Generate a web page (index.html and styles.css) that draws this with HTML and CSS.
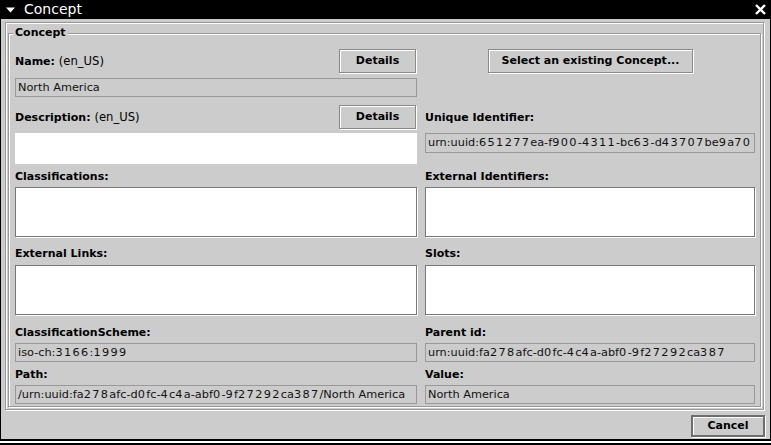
FILE: index.html
```html
<!DOCTYPE html>
<html>
<head>
<meta charset="utf-8">
<link rel="stylesheet" href="styles.css">
</head>
<body>
<div class="frame">
  <div class="window">
    <div class="titlebar">
      <svg class="menu-tri" width="10" height="6" viewBox="0 0 10 6"><polygon points="0,0.5 9,0.5 4.5,5.5" fill="#fff"/></svg>
      <span class="title">Concept</span>
      <svg class="close" width="11" height="11" viewBox="0 0 11 11"><path d="M1 1 L10 10 M10 1 L1 10" stroke="#fff" stroke-width="2.4" fill="none"/></svg>
    </div>
    <div class="content">
      <div class="panel">
        <div class="group">
          <span class="legend">Concept</span>
          <div class="grid">
            <div class="hdr">
              <span class="lbl">Name: <span class="loc">(en_US)</span></span>
              <button class="btn details">Details</button>
            </div>
            <button class="btn select">Select an existing Concept...</button>

            <div class="field r2">North America</div>
            <div></div>

            <div class="hdr r3">
              <span class="lbl">Description: <span class="loc">(en_US)</span></span>
              <button class="btn details">Details</button>
            </div>
            <div class="lbl r3 mid">Unique Identifier:</div>

            <div class="textarea r4"></div>
            <div class="field uid r4">urn:uuid:<span class="n">651277</span>ea-f<span class="n">900</span>-<span class="n">4311</span>-bc<span class="n">63</span>-d<span class="n">43707</span>be<span class="n">9</span>a<span class="n">70</span></div>

            <div class="lbl r5">Classifications:</div>
            <div class="lbl r5">External Identifiers:</div>

            <div class="list r6"></div>
            <div class="list r6"></div>

            <div class="lbl r7">External Links:</div>
            <div class="lbl r7">Slots:</div>

            <div class="list r8"></div>
            <div class="list r8"></div>

            <div class="lbl r9">ClassificationScheme:</div>
            <div class="lbl r9">Parent id:</div>

            <div class="field r10">iso-ch:<span class="n">3166</span>:<span class="n">1999</span></div>
            <div class="field r10">urn:uuid:fa<span class="n">278</span>afc-d<span class="n">0</span>fc-<span class="n">4</span>c<span class="n">4</span>a-abf<span class="n">0</span>-<span class="n">9</span>f<span class="n">27292</span>ca<span class="n">387</span></div>

            <div class="lbl r11">Path:</div>
            <div class="lbl r11">Value:</div>

            <div class="field r12">/urn:uuid:fa<span class="n">278</span>afc-d<span class="n">0</span>fc-<span class="n">4</span>c<span class="n">4</span>a-abf<span class="n">0</span>-<span class="n">9</span>f<span class="n">27292</span>ca<span class="n">387</span>/North America</div>
            <div class="field r12">North America</div>
          </div>
        </div>
      </div>
      <div class="footer">
        <button class="btn cancel">Cancel</button>
      </div>
    </div>
  </div>
</div>
</body>
</html>
```

FILE: styles.css
```css
* { box-sizing: border-box; }
html, body { margin: 0; padding: 0; }
body {
  width: 771px;
  height: 445px;
  overflow: hidden;
  font-family: "DejaVu Sans", sans-serif;
  font-size: 11px;
  color: #000;
  background: #000;
}
.frame {
  width: 771px;
  height: 445px;
  background: #000;
}
.window {
  width: 771px;
  height: 441px;
  background: #cccccc;
  border-left: 1px solid #000;
  border-right: 1px solid #000;
  border-bottom: 2px solid #000;
  box-shadow: 0 2px 0 #fff;
  display: flex;
  flex-direction: column;
}
.titlebar {
  height: 19px;
  background: #000;
  color: #fff;
  display: flex;
  align-items: center;
  padding-left: 5px;
  padding-right: 4px;
  flex: none;
}
.menu-tri { display: block; margin-top: 1px; }
.title {
  font-size: 14px;
  line-height: 19px;
  margin-left: 8px;
  flex: 1;
}
.close { display: block; }
.content {
  flex: 1;
  padding: 3px 5px 0 4px;
  display: flex;
  flex-direction: column;
}
.panel {
  width: 759px;
  border: 1px solid #999;
  box-shadow: inset 1px 1px 0 #fff, 1px 1px 0 #fff;
  padding: 10px 2px 2px 2px;
}
.group {
  position: relative;
  width: 753px;
  border: 1px solid #999;
  box-shadow: inset 1px 1px 0 #fff, 1px 1px 0 #fff;
  padding: 15px 5px 2px 6px;
}
.legend {
  position: absolute;
  left: 4px;
  top: -8px;
  padding: 0 2px;
  background: #cccccc;
  font-weight: bold;
  font-size: 11px;
  line-height: 13px;
}
.grid {
  display: grid;
  grid-template-columns: 402px 330px;
  column-gap: 8px;
  align-items: start;
}
.hdr {
  height: 24px;
  display: flex;
  justify-content: space-between;
  align-items: center;
}
.lbl {
  font-weight: bold;
  font-size: 11px;
  line-height: 13px;
  white-space: nowrap;
}
.loc { font-weight: normal; font-size: 11.6px; }
.mid { align-self: center; }
.btn {
  font-family: "DejaVu Sans", sans-serif;
  font-weight: bold;
  font-size: 11px;
  color: #000;
  background: #cccccc;
  border: 1px solid #8a8a8a;
  box-shadow: inset 1px 1px 0 #fff, 1px 1px 0 #fff;
  padding: 0;
  margin: 0;
  height: 24px;
  line-height: 20px;
}
.details { width: 77px; margin-right: 1px; }
.select { width: 205px; justify-self: center; margin-left: 1px; }
.field {
  height: 19px;
  border: 1px solid #999;
  background: #cccccc;
  font-size: 11.3px;
  line-height: 17px;
  padding-left: 2px;
  white-space: nowrap;
  overflow: hidden;
  color: #111;
}
.n { letter-spacing: 1.35px; }
.r2 { margin-top: 5px; }
.r3 { margin-top: 8px; }
.r4 { margin-top: 4px; }
.textarea { height: 31px; background: #fff; }
.uid { height: 20px; line-height: 18px; }
.r5 { margin-top: 6px; }
.list {
  height: 50px;
  background: #fff;
  border: 1px solid #777;
  box-shadow: 1px 1px 0 #fff;
}
.r6 { margin-top: 4px; }
.r7 { margin-top: 10px; }
.r8 { margin-top: 5px; }
.r9 { margin-top: 11px; }
.r10 { margin-top: 4px; }
.r11 { margin-top: 6px; }
.r12 { margin-top: 4px; }
.footer {
  display: flex;
  justify-content: flex-end;
  padding-top: 5px;
}
.cancel {
  width: 74px;
  height: 22px;
  border: 2px solid #6e6e6e;
  box-shadow: inset 1px 1px 0 #fff, 1px 1px 0 #fff;
  line-height: 18px;
}
```
